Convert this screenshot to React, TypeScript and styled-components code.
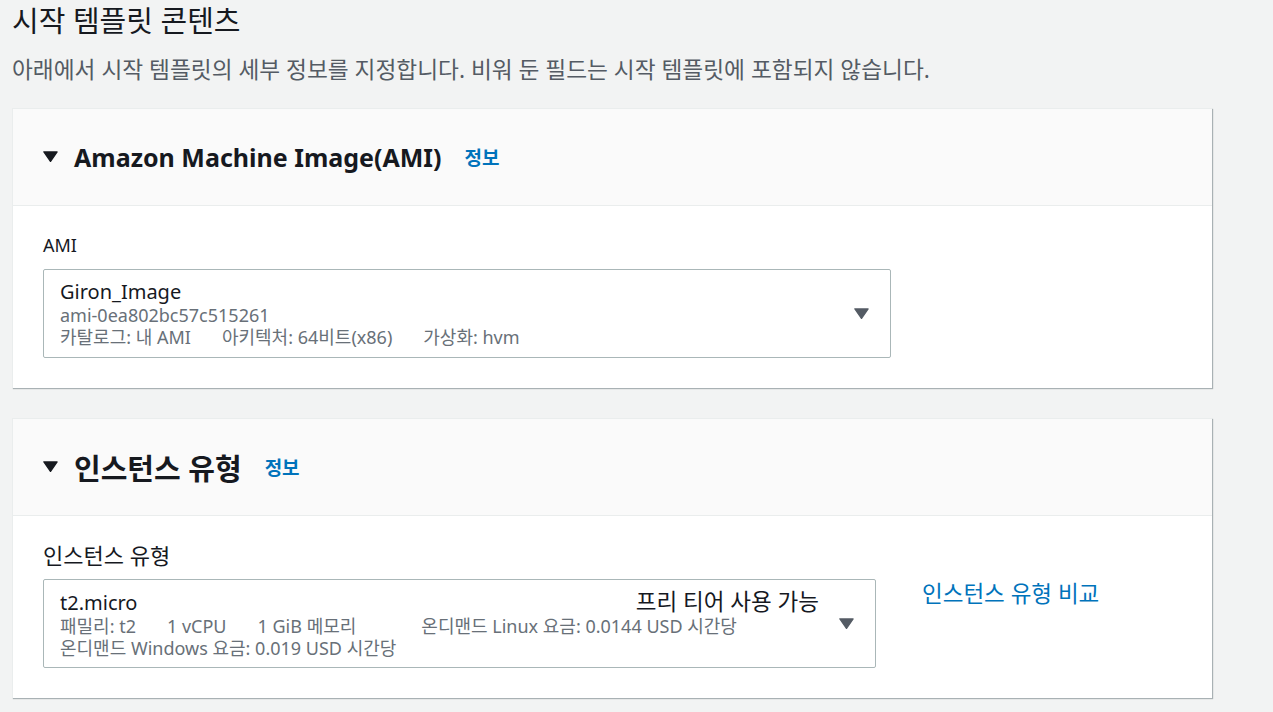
import styled, { createGlobalStyle } from "styled-components";

const GlobalStyle = createGlobalStyle`
	body {
		margin: 0;
		background: #f2f3f3;
		font-family: "Noto Sans", "Noto Sans CJK KR", sans-serif;
		color: #16191f;
	}
`;

const Page = styled.div`
	width: 1200px;
	padding: 0 12px 30px;
`;

const PageHead = styled.div`
	display: flex;
	flex-direction: column;
	gap: 15px;
	padding-top: 2px;
	margin-bottom: 23px;

	h1 {
		margin: 0;
		font-size: 29px;
		font-weight: 400;
		line-height: 38px;
	}

	p {
		margin: 0;
		font-size: 22.7px;
		line-height: 30px;
		color: #545b64;
	}
`;

const Card = styled.section`
	background: #fff;
	border-top: 1px solid #eaeded;
	border-left: 1px solid #eaeded;
	box-shadow: 1px 1px 1px 0 rgba(0, 28, 36, 0.3);
	margin-bottom: 30px;
`;

const CardHeader = styled.div`
	display: flex;
	align-items: center;
	height: 96px;
	padding: 0 30px;
	background: #fafafa;
	border-bottom: 1px solid #eaeded;
`;

const Heading = styled.h2<{ $size: number }>`
	margin: 0 0 0 16px;
	font-size: ${(p) => p.$size}px;
	font-weight: 700;
`;

const InfoLink = styled.a`
	margin-left: 23px;
	font-size: 19px;
	font-weight: 700;
	color: #0073bb;
	text-decoration: none;
`;

const CardBody = styled.div`
	padding: 27px 30px 30px;
`;

const Label = styled.div<{ $size: number }>`
	font-size: ${(p) => p.$size}px;
	line-height: 24px;
	margin-bottom: 12px;
`;

const FieldRow = styled.div`
	display: flex;
	align-items: flex-start;
	gap: 46px;
`;

const Select = styled.div<{ $width: number }>`
	display: flex;
	align-items: center;
	width: ${(p) => p.$width}px;
	box-sizing: border-box;
	height: 89px;
	padding: 0 21px 0 16px;
	border: 1px solid #aab7b8;
	border-radius: 2px;
`;

const SelectContent = styled.div`
	flex: 1;
	padding-right: 20px;
`;

const MainLine = styled.div`
	display: flex;
	justify-content: space-between;
	align-items: baseline;
	font-size: 20px;
	line-height: 25px;
`;

const Badge = styled.span`
	font-size: 22.5px;
	color: #16191f;
`;

const SubLine = styled.div`
	display: flex;
	gap: 31px;
	font-size: 18px;
	line-height: 22px;
	color: #687078;
	white-space: nowrap;
`;

const Spaced = styled.span<{ $extra?: number }>`
	margin-right: ${(p) => p.$extra ?? 0}px;
`;

const CompareLink = styled.a`
	margin-top: 1px;
	font-size: 22.5px;
	line-height: 28px;
	color: #0073bb;
	text-decoration: none;
	white-space: nowrap;
`;

function Caret({ size, color }: { size: number; color: string }) {
	return (
		<svg width={size} height={size * 0.75} viewBox="0 0 16 12">
			<path d="M1 1 L15 1 L8 11 Z" fill={color} stroke={color} strokeLinejoin="round" strokeWidth="1.5" />
		</svg>
	);
}

function App() {
	return (
		<Page>
			<GlobalStyle />
			<PageHead>
				<h1>시작 템플릿 콘텐츠</h1>
				<p>아래에서 시작 템플릿의 세부 정보를 지정합니다. 비워 둔 필드는 시작 템플릿에 포함되지 않습니다.</p>
			</PageHead>

			<Card>
				<CardHeader>
					<Caret size={15} color="#16191f" />
					<Heading $size={25}>Amazon Machine Image(AMI)</Heading>
					<InfoLink href="#">정보</InfoLink>
				</CardHeader>
				<CardBody>
					<Label $size={18}>AMI</Label>
					<Select $width={848}>
						<SelectContent>
							<MainLine>
								<span>Giron_Image</span>
							</MainLine>
							<SubLine>ami-0ea802bc57c515261</SubLine>
							<SubLine>
								<span>카탈로그: 내 AMI</span>
								<span>아키텍처: 64비트(x86)</span>
								<span>가상화: hvm</span>
							</SubLine>
						</SelectContent>
						<Caret size={15} color="#545b64" />
					</Select>
				</CardBody>
			</Card>

			<Card>
				<CardHeader>
					<Caret size={15} color="#16191f" />
					<Heading $size={29}>인스턴스 유형</Heading>
					<InfoLink href="#">정보</InfoLink>
				</CardHeader>
				<CardBody>
					<Label $size={22}>인스턴스 유형</Label>
					<FieldRow>
						<Select $width={833}>
							<SelectContent>
								<MainLine>
									<span>t2.micro</span>
									<Badge>프리 티어 사용 가능</Badge>
								</MainLine>
								<SubLine>
									<span>패밀리: t2</span>
									<span>1 vCPU</span>
									<Spaced $extra={34}>1 GiB 메모리</Spaced>
									<span>온디맨드 Linux 요금: 0.0144 USD 시간당</span>
								</SubLine>
								<SubLine>온디맨드 Windows 요금: 0.019 USD 시간당</SubLine>
							</SelectContent>
							<Caret size={15} color="#545b64" />
						</Select>
						<CompareLink href="#">인스턴스 유형 비교</CompareLink>
					</FieldRow>
				</CardBody>
			</Card>
		</Page>
	);
}

export default App;
